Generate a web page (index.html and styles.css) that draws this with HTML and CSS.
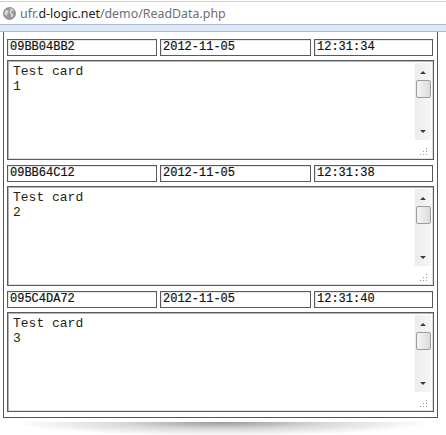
FILE: index.html
```html
<!DOCTYPE html>
<html>
<head>
<meta charset="utf-8">
<link rel="stylesheet" href="styles.css">
</head>
<body>
<div class="window">
  <div class="addressbar">
    <svg class="globe" width="13" height="13" viewBox="0 0 13 13">
      <circle cx="6.5" cy="6.5" r="6" fill="#9a9a9a"/>
      <path d="M2.5 3.5 C4 2.5 5.5 3 5.5 4.5 C5.5 6 3.8 6 4.3 7.5 C4.6 8.6 3.2 9 2.2 8 C1.2 6.5 1.4 4.6 2.5 3.5 Z" fill="#d6d6d6"/>
      <path d="M7.5 1.2 C9 1.4 10.5 2.3 11.3 3.6 C10.4 4.2 9 3.6 8.3 4.4 C7.6 5.2 8.8 6.4 9.8 6.8 C10.6 7.2 10.4 8.8 9.6 9.8 C8.6 10.8 7.8 9.6 8 8.6 C8.2 7.2 6.6 6.8 6.6 5.6 C6.6 4.4 7.8 3.6 7 2.6 Z" fill="#d6d6d6"/>
      <circle cx="6.5" cy="6.5" r="6" fill="none" stroke="#7d7d7d" stroke-width="0.8"/>
    </svg>
    <span class="url"><span class="dim">ufr.</span>d-logic.net<span class="dim">/demo/ReadData.php</span></span>
  </div>
  <div class="band"></div>
  <div class="viewport">
    <div class="record">
      <div class="fields">
        <div class="field f1">09BB04BB2</div>
        <div class="field f2">2012-11-05</div>
        <div class="field f3">12:31:34</div>
      </div>
      <div class="memo">
        <div class="memo-text">Test card<br>1</div>
        <div class="side">
          <div class="scroll">
            <div class="arrow up"></div>
            <div class="thumb"></div>
            <div class="track"></div>
            <div class="arrow down"></div>
          </div>
          <svg class="grip" width="8" height="8" viewBox="0 0 8 8">
            <rect x="6" y="0" width="1" height="1" fill="#9a9a9a"/>
            <rect x="3" y="3" width="1" height="1" fill="#9a9a9a"/>
            <rect x="6" y="3" width="1" height="1" fill="#9a9a9a"/>
            <rect x="0" y="6" width="1" height="1" fill="#9a9a9a"/>
            <rect x="3" y="6" width="1" height="1" fill="#9a9a9a"/>
            <rect x="6" y="6" width="1" height="1" fill="#9a9a9a"/>
          </svg>
        </div>
      </div>
    </div>
    <div class="record">
      <div class="fields">
        <div class="field f1">09BB64C12</div>
        <div class="field f2">2012-11-05</div>
        <div class="field f3">12:31:38</div>
      </div>
      <div class="memo">
        <div class="memo-text">Test card<br>2</div>
        <div class="side">
          <div class="scroll">
            <div class="arrow up"></div>
            <div class="thumb"></div>
            <div class="track"></div>
            <div class="arrow down"></div>
          </div>
          <svg class="grip" width="8" height="8" viewBox="0 0 8 8">
            <rect x="6" y="0" width="1" height="1" fill="#9a9a9a"/>
            <rect x="3" y="3" width="1" height="1" fill="#9a9a9a"/>
            <rect x="6" y="3" width="1" height="1" fill="#9a9a9a"/>
            <rect x="0" y="6" width="1" height="1" fill="#9a9a9a"/>
            <rect x="3" y="6" width="1" height="1" fill="#9a9a9a"/>
            <rect x="6" y="6" width="1" height="1" fill="#9a9a9a"/>
          </svg>
        </div>
      </div>
    </div>
    <div class="record">
      <div class="fields">
        <div class="field f1">095C4DA72</div>
        <div class="field f2">2012-11-05</div>
        <div class="field f3">12:31:40</div>
      </div>
      <div class="memo">
        <div class="memo-text">Test card<br>3</div>
        <div class="side">
          <div class="scroll">
            <div class="arrow up"></div>
            <div class="thumb"></div>
            <div class="track"></div>
            <div class="arrow down"></div>
          </div>
          <svg class="grip" width="8" height="8" viewBox="0 0 8 8">
            <rect x="6" y="0" width="1" height="1" fill="#9a9a9a"/>
            <rect x="3" y="3" width="1" height="1" fill="#9a9a9a"/>
            <rect x="6" y="3" width="1" height="1" fill="#9a9a9a"/>
            <rect x="0" y="6" width="1" height="1" fill="#9a9a9a"/>
            <rect x="3" y="6" width="1" height="1" fill="#9a9a9a"/>
            <rect x="6" y="6" width="1" height="1" fill="#9a9a9a"/>
          </svg>
        </div>
      </div>
    </div>
  </div>
  <div class="shadow"></div>
</div>
</body>
</html>
```
FILE: styles.css
```css
* { box-sizing: border-box; }
html, body { margin: 0; padding: 0; background: #fff; }
body { width: 446px; height: 435px; overflow: hidden; }

.window { padding-top: 1px; }

.addressbar {
  height: 23px;
  border-top: 1px solid #c3d1e2;
  display: flex;
  align-items: center;
  padding-left: 3px;
  gap: 4px;
}
.globe { flex: none; margin-top: 1px; }
.url {
  font-family: "Noto Sans", "Open Sans", sans-serif;
  font-size: 12.4px;
  color: #1a1a1a;
  letter-spacing: 0;
}
.dim { color: #6e6e6e; }

.band {
  height: 8px;
  background: #dce8f5;
  border-top: 1px solid #a9bdd5;
  border-bottom: 1px solid #a9bdd5;
}

.viewport {
  margin-left: 3px;
  width: 435px;
  border-left: 1px solid #555;
  border-right: 1px solid #555;
  border-bottom: 1px solid #555;
  padding: 7px 3px 5px 3px;
  display: flex;
  flex-direction: column;
  gap: 5px;
}

.record { display: flex; flex-direction: column; gap: 4px; }

.fields { display: flex; gap: 3px; }
.field {
  height: 17px;
  border: 1px solid #5a5a5a;
  box-shadow: inset 1px 1px 0 #e6e6e6;
  font-family: "Liberation Mono", "Courier New", monospace;
  font-size: 12px;
  line-height: 15px;
  color: #111;
  padding-left: 2px;
  white-space: nowrap;
  -webkit-text-stroke: 0.2px #111;
}
.f1 { width: 150px; }
.f2 { width: 151px; }
.f3 { width: 119px; }

.memo {
  height: 100px;
  border: 1px solid #5a5a5a;
  display: flex;
  box-shadow: inset 1px 1px 0 #b4b4b4, inset -1px -1px 0 #e0e0e0;
}
.memo-text {
  flex: 1;
  font-family: "Liberation Mono", "Courier New", monospace;
  font-size: 13px;
  line-height: 15px;
  color: #2a1e10;
  padding: 3px 0 0 5px;
}
.side {
  width: 16px;
  margin: 2px 2px 0 0;
  display: flex;
  flex-direction: column;
  align-items: center;
}
.scroll {
  width: 16px;
  height: 77px;
  background: linear-gradient(to right, #ececec, #f6f6f6);
  display: flex;
  flex-direction: column;
  align-items: center;
}
.arrow { width: 0; height: 0; border-left: 3px solid transparent; border-right: 3px solid transparent; }
.arrow.up { border-bottom: 3px solid #3c3c3c; margin-top: 8px; }
.arrow.down { border-top: 3px solid #3c3c3c; margin-bottom: 7px; }
.thumb {
  width: 15px;
  height: 18px;
  margin-top: 6px;
  border: 1px solid #9c9c9c;
  border-radius: 2px;
  background: linear-gradient(to right, #f4f4f4, #dcdcdc);
}
.track { flex: 1; }
.grip { margin-top: 8px; margin-left: 2px; }

.shadow {
  margin: 4px auto 0;
  width: 420px;
  height: 14px;
  background: radial-gradient(ellipse 50% 100% at 50% 0%, rgba(120,120,120,0.75) 0%, rgba(160,160,160,0.4) 50%, rgba(255,255,255,0) 100%);
}
```
